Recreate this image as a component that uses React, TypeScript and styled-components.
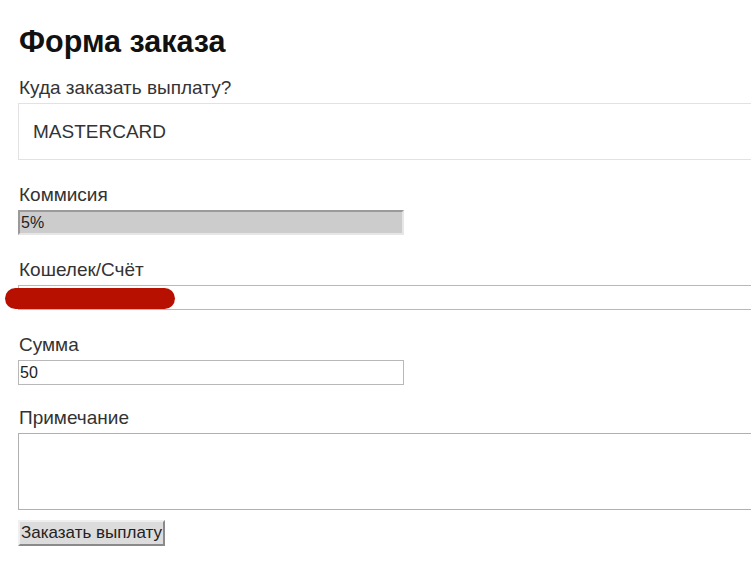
import styled, { createGlobalStyle } from 'styled-components';

const GlobalStyle = createGlobalStyle`
  html, body {
    margin: 0;
    padding: 0;
    background: #ffffff;
    overflow: hidden;
  }
  body {
    font-family: "Liberation Sans", Arial, sans-serif;
    color: #222;
  }
`;

const Page = styled.div`
  width: 751px;
  height: 570px;
  overflow: hidden;
  padding: 23px 0 0 18px;
  box-sizing: border-box;
`;

const Title = styled.h1`
  font-size: 30.5px;
  font-weight: 700;
  color: #111;
  margin: 0 0 18px 1px;
  line-height: 36px;
`;

const Field = styled.div<{ $gap?: number }>`
  display: flex;
  flex-direction: column;
  margin-bottom: ${({ $gap = 24 }) => $gap}px;
  position: relative;
`;

const Label = styled.label`
  font-size: 19px;
  color: #333;
  line-height: 22px;
  margin: 0 0 4px 1px;
`;

const SelectBox = styled.div`
  width: 760px;
  height: 57px;
  box-sizing: border-box;
  border: 1px solid #e2e2e2;
  display: flex;
  align-items: center;
  padding-left: 14px;
  font-size: 19px;
  color: #333;
`;

const TextInput = styled.input<{ $wide?: boolean; $disabled?: boolean }>`
  box-sizing: border-box;
  width: ${({ $wide }) => ($wide ? '760px' : '386px')};
  height: 25px;
  font-family: "Liberation Sans", Arial, sans-serif;
  font-size: 16px;
  color: #222;
  padding: 1px 1px 0;
  outline: none;
  background: ${({ $disabled }) => ($disabled ? '#cccccc' : '#ffffff')};
  border-style: solid;
  border-width: ${({ $disabled }) => ($disabled ? '2px' : '1px')};
  border-color: ${({ $disabled }) =>
    $disabled ? '#9a9a9a #e6e6e6 #e6e6e6 #9a9a9a' : '#b8b8b8'};
`;

const TextArea = styled.textarea`
  box-sizing: border-box;
  width: 760px;
  height: 77px;
  border: 1px solid #b0b0b0;
  resize: none;
  outline: none;
  font-family: "Liberation Sans", Arial, sans-serif;
`;

const Redaction = styled.div`
  position: absolute;
  left: -13px;
  top: 29px;
  width: 170px;
  height: 21px;
  border-radius: 11px;
  background: #b81000;
`;

const SubmitButton = styled.button`
  align-self: flex-start;
  height: 26px;
  padding: 0 1px;
  font-family: "Liberation Sans", Arial, sans-serif;
  font-size: 17px;
  color: #222;
  background: #dcdcdc;
  border-style: solid;
  border-width: 2px;
  border-color: #efefef #8a8a8a #8a8a8a #efefef;
`;

export default function App() {
  return (
    <Page>
      <GlobalStyle />
      <Title>Форма заказа</Title>
      <Field $gap={24}>
        <Label>Куда заказать выплату?</Label>
        <SelectBox>MASTERCARD</SelectBox>
      </Field>
      <Field $gap={24}>
        <Label>Коммисия</Label>
        <TextInput $disabled readOnly value="5%" />
      </Field>
      <Field $gap={24}>
        <Label>Кошелек/Счёт</Label>
        <TextInput $wide readOnly value="" />
        <Redaction />
      </Field>
      <Field $gap={22}>
        <Label>Сумма</Label>
        <TextInput readOnly value="50" />
      </Field>
      <Field $gap={10}>
        <Label>Примечание</Label>
        <TextArea readOnly />
      </Field>
      <Field $gap={0}>
        <SubmitButton>Заказать выплату</SubmitButton>
      </Field>
    </Page>
  );
}
